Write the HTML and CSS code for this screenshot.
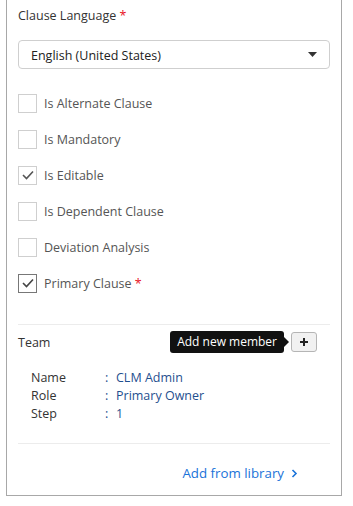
FILE: index.html
```html
<!DOCTYPE html>
<html>
<head>
<meta charset="utf-8">
<link rel="stylesheet" href="styles.css">
</head>
<body>
<div class="panel">
  <div class="field-label">Clause Language <span class="req">*</span></div>
  <div class="select">
    <span class="sel-text">English (United States)</span>
    <svg class="caret" width="9" height="5" viewBox="0 0 9 5"><path d="M0 0h9L4.5 5z" fill="#333"/></svg>
  </div>
  <div class="checks">
    <div class="check"><span class="box"></span><span>Is Alternate Clause</span></div>
    <div class="check"><span class="box"></span><span>Is Mandatory</span></div>
    <div class="check"><span class="box"><svg width="12" height="10" viewBox="0 0 12 10"><path d="M1 5l3.5 3.5L11 1.5" fill="none" stroke="#555" stroke-width="1.6"/></svg></span><span>Is Editable</span></div>
    <div class="check"><span class="box"></span><span>Is Dependent Clause</span></div>
    <div class="check"><span class="box"></span><span>Deviation Analysis</span></div>
    <div class="check"><span class="box dark"><svg width="12" height="10" viewBox="0 0 12 10"><path d="M1 5l3.5 3.5L11 1.5" fill="none" stroke="#444" stroke-width="1.6"/></svg></span><span>Primary Clause <span class="req">*</span></span></div>
  </div>
  <div class="sep"></div>
  <div class="team-head">
    <span class="team-title">Team</span>
    <div class="team-actions">
      <span class="tooltip">Add new member</span>
      <button class="add-btn"><svg width="10" height="10" viewBox="0 0 10 10"><path d="M5 1v8M1 5h8" stroke="#222" stroke-width="2"/></svg></button>
    </div>
  </div>
  <div class="details">
    <span class="k">Name</span><span class="v"><span class="colon">:</span>CLM Admin</span>
    <span class="k">Role</span><span class="v"><span class="colon">:</span>Primary Owner</span>
    <span class="k">Step</span><span class="v"><span class="colon">:</span>1</span>
  </div>
  <div class="sep sep2"></div>
  <div class="footer">
    <a class="lib">Add from library <svg width="7" height="9" viewBox="0 0 7 9"><path d="M1.5 1l3.5 3.5L1.5 8" fill="none" stroke="#1a73d9" stroke-width="1.6"/></svg></a>
  </div>
</div>
</body>
</html>
```

FILE: styles.css
```css
* { box-sizing: border-box; }
html, body { margin: 0; padding: 0; background: #fff; }
body { font-family: "Open Sans", "Noto Sans", sans-serif; font-size: 12.5px; color: #333; }
.panel {
  margin-left: 6px;
  width: 336px;
  height: 496px;
  border: 1px solid #a8a8a8;
  border-top: none;
  padding: 7px 11px 0 11px;
  display: flex;
  flex-direction: column;
}
.field-label { line-height: 18px; color: #333; }
.req { color: #e81123; }
.select {
  margin-top: 15px;
  height: 29px;
  border: 1px solid #cfcfcf;
  border-radius: 4px;
  display: flex;
  align-items: center;
  justify-content: space-between;
  padding: 2px 12px 0 12px;
  color: #222;
}
.caret { margin-bottom: 2px; }
.checks { display: flex; flex-direction: column; gap: 18px; margin-top: 25px; }
.check { display: flex; align-items: center; gap: 7px; height: 18px; color: #555; }
.box {
  width: 19px; height: 19px;
  border: 1px solid #cfcfcf;
  display: flex; align-items: center; justify-content: center;
  flex: none;
}
.box.dark { border-color: #777; }
.sep { height: 1px; background: #ececec; margin-top: 32px; }
.team-head { display: flex; justify-content: space-between; align-items: center; margin-top: 6px; height: 22px; }
.team-title { color: #333; }
.team-actions { display: flex; align-items: center; margin-right: 13px; }
.tooltip {
  position: relative;
  background: #111;
  color: #fff;
  border-radius: 3px;
  padding: 0 7px;
  font-size: 12px;
  height: 22px;
  line-height: 22px;
  margin-right: 7px;
}
.tooltip::after {
  content: "";
  position: absolute;
  right: -5px; top: 6px;
  border-left: 5px solid #111;
  border-top: 5px solid transparent;
  border-bottom: 5px solid transparent;
}
.add-btn {
  width: 26px; height: 20px;
  border: 1px solid #b5b5b5;
  border-radius: 3px;
  background: #f1f1f1;
  display: flex; align-items: center; justify-content: center;
  padding: 0;
}
.details {
  display: grid;
  grid-template-columns: 74px auto;
  row-gap: 0;
  margin: 16px 0 0 13px;
  line-height: 18px;
}
.k { color: #333; }
.v { color: #1f4f8f; }
.colon { color: #1f4f8f; display: inline-block; width: 11px; }
.sep2 { margin-top: 20px; }
.footer { display: flex; justify-content: flex-end; padding-right: 32px; margin-top: 20px; }
.lib { color: #1a73d9; font-size: 13.3px; display: flex; align-items: center; gap: 7px; }
```
